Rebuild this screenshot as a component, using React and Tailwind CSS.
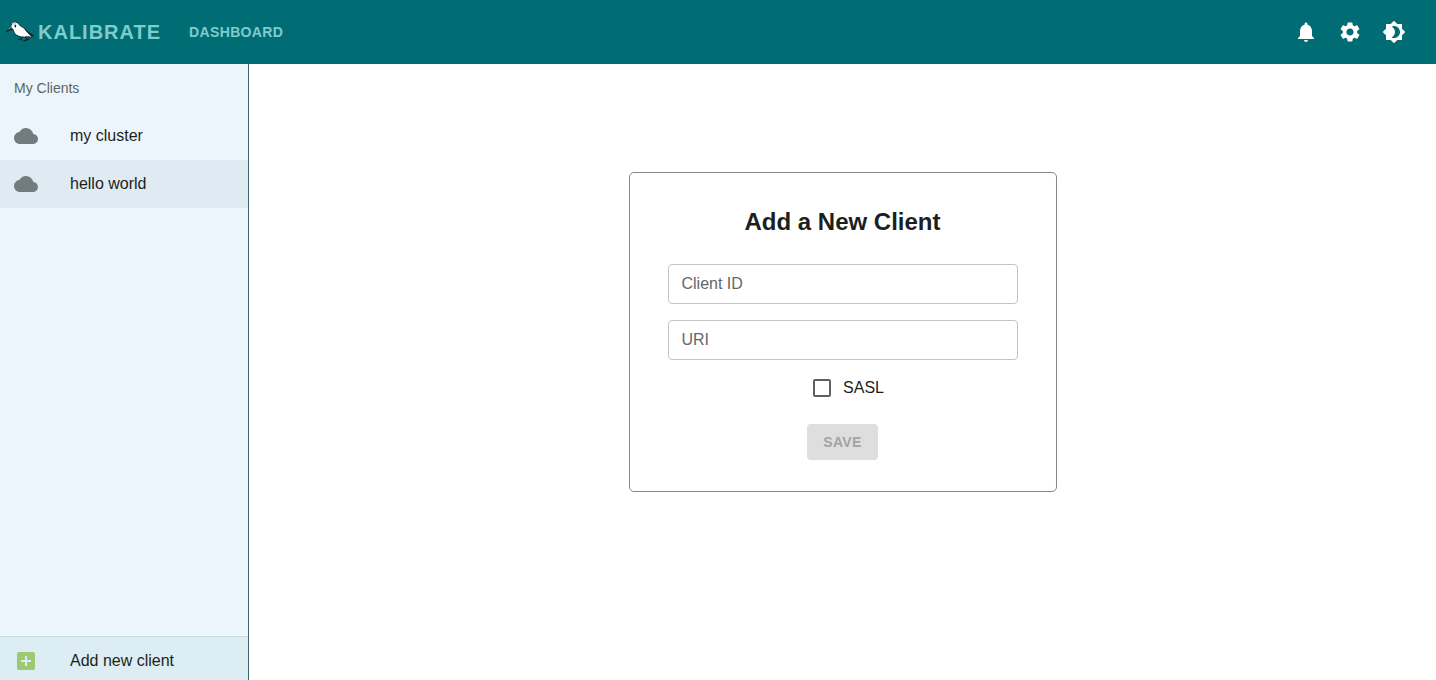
import { useState } from "react";
import {
  MdNotifications,
  MdSettings,
  MdBrightness4,
  MdCloud,
  MdAddBox,
} from "react-icons/md";

const clients = [
  { name: "my cluster", active: false },
  { name: "hello world", active: true },
];

const actions = [
  { label: "Notifications", Icon: MdNotifications },
  { label: "Settings", Icon: MdSettings },
  { label: "Toggle theme", Icon: MdBrightness4 },
];

function BirdLogo() {
  return (
    <svg viewBox="0 0 84 66" className="h-[22px] w-7" aria-hidden="true">
      <path d="M48 50l-3 6M45 56l-7-1M60 50l2 8M62 58l-9 1M62 58l6-4" fill="none" stroke="#12242a" strokeWidth="3.5" strokeLinecap="round" />
      <path d="M17 15L1 32L20 25Z" fill="#12242a" stroke="#12242a" strokeWidth="2" />
      <path d="M17 15l-8 10" stroke="#8fd0d3" strokeWidth="3" />
      <path d="M15 14C16 5 22 1 29 3C35 4 38 8 41 13C50 18 59 24 65 33L83 44L78 49L64 47C53 50 39 48 31 42C23 37 24 31 21 25C16 23 14 19 15 14Z" fill="#fff" stroke="#12242a" strokeWidth="3" strokeLinejoin="round" />
      <path d="M54 24L66 32L83 44L78 49L70 41Z" fill="#12242a" />
      <path d="M18 11C20 6 25 4 31 7L24 11Z" fill="#a5dde0" />
      <ellipse cx="28" cy="15" rx="2.5" ry="4.5" fill="#12242a" />
    </svg>
  );
}

function TextField({ id, label, value, onChange }) {
  return (
    <div className="relative">
      <input
        id={id}
        type="text"
        value={value}
        placeholder=" "
        onChange={(e) => onChange(e.target.value)}
        className="peer block h-10 w-full rounded border border-[#c4c4c4] bg-white px-3.5 text-base text-[#212121] outline-none focus:border-[#006d75]"
      />
      <label
        htmlFor={id}
        className="pointer-events-none absolute -top-2 left-2.5 bg-white px-1 text-xs text-[#666666] peer-placeholder-shown:top-2 peer-placeholder-shown:text-base peer-focus:-top-2 peer-focus:text-xs"
      >
        {label}
      </label>
    </div>
  );
}

export default function App() {
  const [clientId, setClientId] = useState("");
  const [uri, setUri] = useState("");
  const [sasl, setSasl] = useState(false);

  return (
    <div className="flex h-screen flex-col overflow-hidden bg-white font-['Liberation_Sans',Arial,sans-serif] text-[#1c1f20]">
      <header className="flex h-16 shrink-0 items-center bg-[#006d75] pr-5 pl-1.5">
        <a href="#home" className="flex items-center gap-1 text-xl font-bold tracking-wider text-[#80cbcb]">
          <BirdLogo />
          KALIBRATE
        </a>
        <nav className="ml-7">
          <a href="#dashboard" className="text-sm font-bold tracking-wide text-[#80cbcb]">DASHBOARD</a>
        </nav>
        <div className="ml-auto flex">
          {actions.map(({ label, Icon }) => (
            <button key={label} type="button" aria-label={label} className="flex size-11 items-center justify-center rounded-full text-white">
              <Icon className="size-6" />
            </button>
          ))}
        </div>
      </header>

      <div className="flex min-h-0 flex-1">
        <aside className="flex w-[249px] shrink-0 flex-col border-r border-[#3f6468] bg-[#ecf5fc]">
          <h2 className="flex h-12 items-center px-3.5 text-sm text-[#5c6467]">My Clients</h2>
          <ul>
            {clients.map(({ name, active }) => (
              <li key={name}>
                <a
                  href="#client"
                  className={`flex h-12 items-center gap-8 px-3.5 text-base ${active ? "bg-[#dfebf3]" : ""}`}
                >
                  <MdCloud className="size-6 text-[#737b7f]" />
                  {name}
                </a>
              </li>
            ))}
          </ul>
          <button type="button" className="mt-auto flex h-11 items-center gap-8 border-t border-[#cbd8dc] bg-[#dcedf4] px-3.5 pt-1 text-base">
            <MdAddBox className="size-6 text-[#9ec973]" />
            Add new client
          </button>
        </aside>

        <main className="flex flex-1 flex-col items-center overflow-auto px-4 pt-27">
          <form
            onSubmit={(e) => e.preventDefault()}
            className="flex w-full max-w-[428px] flex-col gap-4 rounded-[5px] border border-[#83898b] px-[38px] pt-[33px] pb-[31px]"
          >
            <h1 className="mb-2.5 text-center text-2xl leading-8 font-bold">Add a New Client</h1>
            <TextField id="client-id" label="Client ID" value={clientId} onChange={setClientId} />
            <TextField id="uri" label="URI" value={uri} onChange={setUri} />
            <label className="flex h-6 items-center gap-3 self-center pl-3 text-base">
              <input
                type="checkbox"
                checked={sasl}
                onChange={(e) => setSasl(e.target.checked)}
                className="size-[18px] appearance-none rounded-xs border-2 border-[#5f6162] checked:bg-[#006d75]"
              />
              SASL
            </label>
            <button type="submit" disabled className="mt-2 h-9 self-center rounded bg-[#dedede] px-4 text-sm font-bold tracking-wide text-[#a3a3a3]">
              SAVE
            </button>
          </form>
        </main>
      </div>
    </div>
  );
}
